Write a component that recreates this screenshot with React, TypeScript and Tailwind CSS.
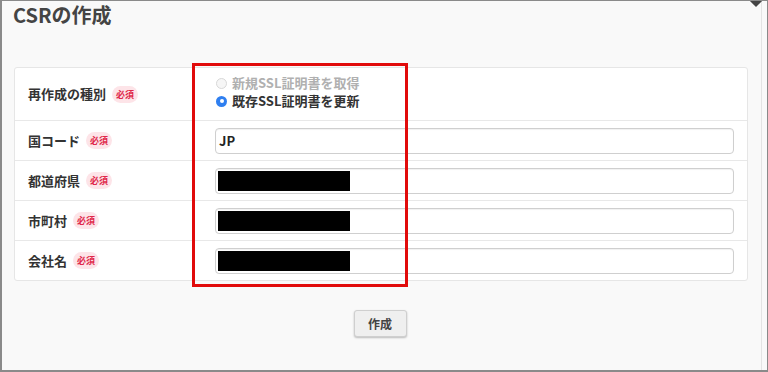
import React from "react";

const font = "font-['Noto_Sans_CJK_JP','Liberation_Sans',sans-serif]";

const Badge = () => (
  <span className="ml-[6px] inline-flex h-[17px] items-center rounded-full bg-[#fde4e8] px-[4px] text-[9px] font-bold leading-none text-[#e0284a]">
    必須
  </span>
);

const Redacted = () => (
  <div className="flex h-[26px] w-full items-center rounded-[4px] border border-[#cfcfcf] bg-white px-[2px] shadow-[inset_0_1px_1px_rgba(0,0,0,0.06)]">
    <div className="h-[20px] w-[132px] bg-black" />
  </div>
);

const rows: { label: string; kind: "radio" | "text" | "redacted"; value?: string }[] = [
  { label: "再作成の種別", kind: "radio" },
  { label: "国コード", kind: "text", value: "JP" },
  { label: "都道府県", kind: "redacted" },
  { label: "市町村", kind: "redacted" },
  { label: "会社名", kind: "redacted" },
];

export default function App() {
  return (
    <div
      className={`relative h-[372px] w-[768px] overflow-hidden border-t border-l-2 border-b-2 border-r border-[#8a8a8a] bg-[#f9f9f9] ${font}`}
    >
      <div className="pointer-events-none absolute right-[5px] top-0 h-full w-px bg-[#e4e4e4]" />
      <div className="absolute right-[6px] top-[-6px] h-[10px] w-[10px] rotate-45 bg-[#444]" />
      <h1 className="ml-[11px] mt-[1px] text-[20px] font-bold leading-[25px] text-[#444]">CSRの作成</h1>

      <div className="relative ml-[12px] mr-[19px] mt-[40px] rounded-[3px] border border-[#e6e6e6] bg-white">
        {rows.map((r, i) => (
          <div
            key={r.label}
            className={`flex items-center ${i > 0 ? "border-t border-[#e8e8e8]" : ""} ${
              i === 0 ? "h-[52px]" : "h-[40px]"
            }`}
          >
            <div className="flex w-[200px] items-center pl-[13px] text-[13px] font-bold text-[#333]">
              {r.label}
              <Badge />
            </div>
            <div className="flex-1 pr-[13px]">
              {r.kind === "radio" && (
                <div className="flex flex-col gap-[4px] pb-[4px] pl-[1px] text-[13px] font-bold leading-[14px]">
                  <label className="flex items-center gap-[5px] text-[#b0b0b0]">
                    <span className="h-[11px] w-[11px] rounded-full border border-[#d8d8d8] bg-[#f6f6f6]" />
                    新規SSL証明書を取得
                  </label>
                  <label className="flex items-center gap-[5px] text-[#333]">
                    <span className="flex h-[11px] w-[11px] items-center justify-center rounded-full bg-[#2f7ff0]">
                      <span className="h-[4px] w-[4px] rounded-full bg-white" />
                    </span>
                    既存SSL証明書を更新
                  </label>
                </div>
              )}
              {r.kind === "text" && (
                <div className="flex h-[26px] w-full items-center rounded-[4px] border border-[#cfcfcf] bg-white px-[3px] text-[13px] font-bold text-[#222] shadow-[inset_0_1px_1px_rgba(0,0,0,0.06)]">
                  {r.value}
                </div>
              )}
              {r.kind === "redacted" && <Redacted />}
            </div>
          </div>
        ))}
      </div>

      <div className="mt-[29px] flex justify-center pr-[9px]">
        <button className="h-[27px] w-[53px] rounded-[3px] border border-[#cfcfcf] bg-[#efefef] text-[12px] font-bold text-[#444] shadow-[0_1px_2px_rgba(0,0,0,0.25)]">
          作成
        </button>
      </div>

      <div className="pointer-events-none absolute left-[190px] top-[62px] h-[224px] w-[216px] border-[3px] border-[#e10b0b]" />
    </div>
  );
}
